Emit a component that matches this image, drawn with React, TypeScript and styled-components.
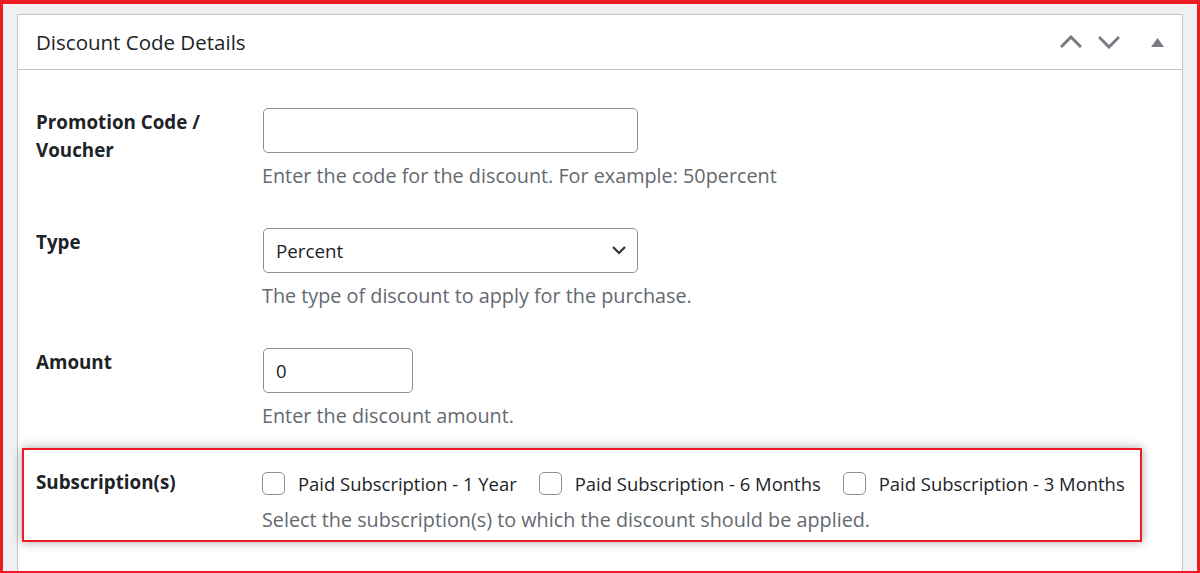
import styled, { createGlobalStyle } from 'styled-components';

const GlobalStyle = createGlobalStyle`
	html, body {
		margin: 0;
		padding: 0;
	}
	body {
		font-family: 'Open Sans', 'Noto Sans', sans-serif;
		color: #1d2327;
		background: #fff;
	}
	* {
		box-sizing: border-box;
	}
`;

const Frame = styled.div`
	height: 573px;
	border: 3px solid #ed1c24;
	border-top-width: 4px;
	border-bottom-width: 2px;
	background: #f0f0f1;
	padding: 10px 14px 0 14px;
	overflow: hidden;
`;

const Postbox = styled.div`
	height: 100%;
	background: #fff;
	border: 1px solid #c3c4c7;
	border-bottom: none;
`;

const Header = styled.div`
	display: flex;
	align-items: center;
	height: 55px;
	padding-left: 18px;
	border-bottom: 1px solid #c3c4c7;
`;

const Title = styled.h2`
	flex: 1;
	margin: 0;
	font-size: 20.5px;
	font-weight: 500;
	color: #1d2327;
`;

const HandleButton = styled.button<{ $wide?: boolean }>`
	display: flex;
	align-items: center;
	justify-content: center;
	width: ${(p) => (p.$wide ? '50px' : '38px')};
	margin-left: ${(p) => (p.$wide ? '4px' : '0')};
	height: 54px;
	padding: 0;
	border: none;
	background: none;
	color: #787c82;
	cursor: pointer;
`;

const Body = styled.div`
	padding: 18px 4px 0 4px;
`;

const Row = styled.div<{ $highlight?: boolean }>`
	display: grid;
	grid-template-columns: 226px auto;
	padding: ${(p) => (p.$highlight ? '18px 15px 6px 12px' : '20px 14px 18px 14px')};
	width: ${(p) => (p.$highlight ? 'fit-content' : 'auto')};
	border: ${(p) => (p.$highlight ? '2px solid #ed1c24' : 'none')};
	box-shadow: ${(p) => (p.$highlight ? '0 0 10px rgba(0, 0, 0, 0.35)' : 'none')};
`;

const Label = styled.label`
	font-size: 18.8px;
	font-weight: 700;
	line-height: 28px;
	color: #1d2327;
	padding-right: 20px;
`;

const Field = styled.div`
	display: flex;
	flex-direction: column;
	align-items: flex-start;
`;

const TextInput = styled.input<{ $size?: 'small' | 'regular' }>`
	width: ${(p) => (p.$size === 'small' ? '150px' : '375px')};
	height: 45px;
	margin: 0 0 0 1px;
	padding: 0 12px;
	border: 1px solid #8c8f94;
	border-radius: 5px;
	font-family: inherit;
	font-size: 18.5px;
	color: #1d2327;
	background: #fff;
	outline: none;
`;

const SelectBox = styled.div`
	position: relative;
	margin-left: 1px;
	width: 375px;
	height: 45px;
`;

const Select = styled.select`
	appearance: none;
	width: 100%;
	height: 100%;
	padding: 0 40px 0 12px;
	border: 1px solid #8c8f94;
	border-radius: 5px;
	font-family: inherit;
	font-size: 18.8px;
	color: #1d2327;
	background: #fff;
	outline: none;
`;

const Chevron = styled.svg`
	position: absolute;
	right: 12px;
	top: 17px;
	pointer-events: none;
`;

const Description = styled.p`
	margin: 9px 0 0 0;
	font-size: 19.8px;
	line-height: 28px;
	color: #646970;
`;

const CheckList = styled.div`
	display: flex;
	align-items: center;
	gap: 22px;
	height: 28px;
	margin-top: 1px;
`;

const CheckItem = styled.label`
	display: flex;
	align-items: center;
	gap: 13px;
	font-size: 18.45px;
	color: #1d2327;
	cursor: pointer;
`;

const Checkbox = styled.input`
	appearance: none;
	width: 23px;
	height: 23px;
	margin: 0;
	border: 1px solid #8c8f94;
	border-radius: 5px;
	background: #fff;
`;

const subscriptions = ['Paid Subscription - 1 Year', 'Paid Subscription - 6 Months', 'Paid Subscription - 3 Months'];

export default function App() {
	return (
		<>
			<GlobalStyle />
			<Frame>
				<Postbox>
					<Header>
						<Title>Discount Code Details</Title>
						<HandleButton aria-label="Move up">
							<svg width="22" height="14" viewBox="0 0 22 14">
								<path d="M1 12 L11 2 L21 12" fill="none" stroke="currentColor" strokeWidth="3" />
							</svg>
						</HandleButton>
						<HandleButton aria-label="Move down">
							<svg width="22" height="14" viewBox="0 0 22 14">
								<path d="M1 2 L11 12 L21 2" fill="none" stroke="currentColor" strokeWidth="3" />
							</svg>
						</HandleButton>
						<HandleButton $wide aria-label="Toggle panel">
							<svg width="13" height="9" viewBox="0 0 13 9">
								<path d="M0 9 L6.5 0 L13 9 Z" fill="currentColor" />
							</svg>
						</HandleButton>
					</Header>
					<Body>
						<Row>
							<Label htmlFor="code">
								Promotion Code /<br />
								Voucher
							</Label>
							<Field>
								<TextInput id="code" type="text" />
								<Description>Enter the code for the discount. For example: 50percent</Description>
							</Field>
						</Row>
						<Row>
							<Label htmlFor="type">Type</Label>
							<Field>
								<SelectBox>
									<Select id="type" defaultValue="percent">
										<option value="percent">Percent</option>
										<option value="fixed">Fixed</option>
									</Select>
									<Chevron width="14" height="10" viewBox="0 0 14 10">
										<path d="M1 2 L7 8 L13 2" fill="none" stroke="#2c3338" strokeWidth="2.2" />
									</Chevron>
								</SelectBox>
								<Description>The type of discount to apply for the purchase.</Description>
							</Field>
						</Row>
						<Row>
							<Label htmlFor="amount">Amount</Label>
							<Field>
								<TextInput id="amount" type="text" $size="small" defaultValue="0" />
								<Description>Enter the discount amount.</Description>
							</Field>
						</Row>
						<Row $highlight>
							<Label>Subscription(s)</Label>
							<Field>
								<CheckList>
									{subscriptions.map((name) => (
										<CheckItem key={name}>
											<Checkbox type="checkbox" />
											{name}
										</CheckItem>
									))}
								</CheckList>
								<Description>Select the subscription(s) to which the discount should be applied.</Description>
							</Field>
						</Row>
					</Body>
				</Postbox>
			</Frame>
		</>
	);
}
